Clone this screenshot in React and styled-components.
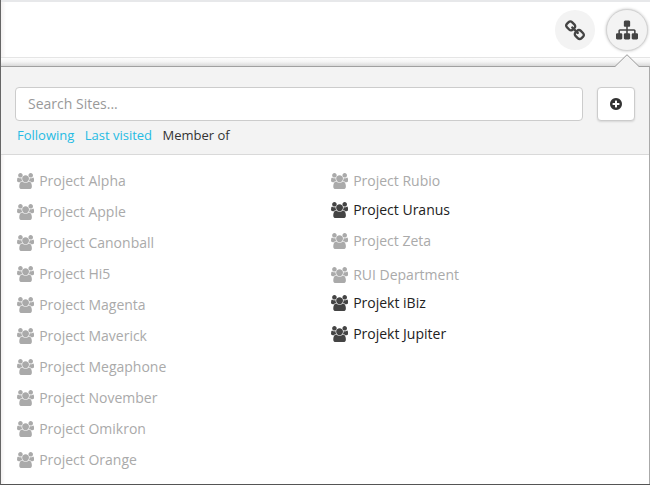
import React from "react";
import styled, { createGlobalStyle } from "styled-components";

const GlobalStyle = createGlobalStyle`
  *, *::before, *::after { box-sizing: border-box; }
  body {
    margin: 0;
    background: #fff;
    font-family: "Open Sans", "Noto Sans", sans-serif;
    font-size: 14px;
    color: #333;
  }
`;

const Frame = styled.div`
  display: flex;
  flex-direction: column;
  width: 650px;
  height: 485px;
  overflow: hidden;
  background: #fff;
  border-left: 1px solid #666;
  border-bottom: 1px solid #555;
`;

const TopBar = styled.header`
  display: flex;
  flex: none;
  align-items: flex-start;
  justify-content: flex-end;
  gap: 11px;
  height: 58px;
  padding: 7px 2px 0 0;
  border-top: 2px solid #e7e8ea;
  border-bottom: 1px solid #e5e5e5;
  background: linear-gradient(90deg, #f3f1f1 0, #fff 5px);
`;

const RoundButton = styled.button`
  display: flex;
  align-items: center;
  justify-content: center;
  width: ${(p) => (p.$active ? 42 : 40)}px;
  height: ${(p) => (p.$active ? 42 : 40)}px;
  margin-top: ${(p) => (p.$active ? 0 : 1)}px;
  padding: ${(p) => (p.$active ? "0 0 1px" : "1px 0 0")};
  border: ${(p) => (p.$active ? "1px solid #d3d3d3" : "0")};
  border-radius: 50%;
  background: #f3f3f3;
  color: #444;
  box-shadow: ${(p) => (p.$active ? "0 0 3px rgba(0, 0, 0, 0.25)" : "none")};
`;

const ShadowStrip = styled.div`
  flex: none;
  height: 8px;
  background: linear-gradient(#fdfdfd 0, #f5f5f5 45%, #d9d9d9 100%);
`;

const Panel = styled.main`
  position: relative;
  flex: 1;
  border-top: 1px solid #a0a0a0;
  border-right: 1px solid #aaa;
`;

const Pointer = styled.svg`
  position: absolute;
  top: -13px;
  left: 613px;
  display: block;
`;

const SearchArea = styled.section`
  height: 88px;
  padding: 20px 14px 0;
  border-bottom: 1px solid #d9d9d9;
  background: #f3f3f3;
`;

const SearchRow = styled.div`
  display: flex;
  gap: 14px;
`;

const SearchInput = styled.input`
  width: 568px;
  height: 34px;
  padding: 0 12px 2px;
  border: 1px solid #ccc;
  border-radius: 4px;
  outline: none;
  background: #fff;
  font: inherit;
  &::placeholder { color: #999; opacity: 1; }
`;

const AddButton = styled.button`
  display: flex;
  align-items: center;
  justify-content: center;
  width: 38px;
  height: 34px;
  padding: 0;
  border: 1px solid #ccc;
  border-radius: 4px;
  background: #fff;
  color: #333;
  box-shadow: 0 1px 2px rgba(0, 0, 0, 0.12);
`;

const Filters = styled.nav`
  display: flex;
  gap: 10.4px;
  padding: 4px 2px 0;
  font-size: 13px;
  line-height: 20px;
`;

const Filter = styled.a`
  color: ${(p) => (p.$current ? "#333" : "#25bbe3")};
`;

const Sites = styled.section`
  display: grid;
  grid-template-columns: 314px 1fr;
  height: 329px;
  padding: 10px 0 0 16px;
  background: linear-gradient(90deg, #f3f1f1 0, #fff 4px);
`;

const SiteList = styled.ul`
  margin: 0;
  padding: 0;
  list-style: none;
`;

const Site = styled.li`
  display: flex;
  align-items: center;
  gap: 5px;
  height: ${(p) => p.$height || 31}px;
  color: ${(p) => (p.$member ? "#222" : "#aaa")};
  line-height: 31px;
  svg {
    margin-top: 1px;
    color: ${(p) => (p.$member ? "#444" : "#aaa")};
  }
`;

const Glyph = styled.svg`
  display: block;
  flex: none;
  fill: currentColor;
`;

function UsersIcon() {
  return (
    <Glyph width="17.15" height="16" viewBox="0 0 1920 1792">
      <path d="M593 896q-162 5-265 128h-134q-82 0-138-40.5t-56-118.5q0-353 124-353 6 0 43.5 21t97.5 42.5 119 21.5q67 0 133-23-5 37-5 66 0 139 81 256zm1071 637q0 120-73 189.5t-194 69.5h-874q-121 0-194-69.5t-73-189.5q0-53 3.5-103.5t14-109 26.5-108.5 43-97.5 62-81 85.5-53.5 111.5-20q10 0 43 21.5t73 48 107 48 135 21.5 135-21.5 107-48 73-48 43-21.5q61 0 111.5 20t85.5 53.5 62 81 43 97.5 26.5 108.5 14 109 3.5 103.5zm-1024-1277q0 106-75 181t-181 75-181-75-75-181 75-181 181-75 181 75 75 181zm704 384q0 159-112.5 271.5t-271.5 112.5-271.5-112.5-112.5-271.5 112.5-271.5 271.5-112.5 271.5 112.5 112.5 271.5zm576 225q0 78-56 118.5t-138 40.5h-134q-103-123-265-128 81-117 81-256 0-29-5-66 66 23 133 23 59 0 119-21.5t97.5-42.5 43.5-21q124 0 124 353zm-128-609q0 106-75 181t-181 75-181-75-75-181 75-181 181-75 181 75 75 181z" />
    </Glyph>
  );
}

function SitemapIcon() {
  return (
    <Glyph width="22" height="22" viewBox="0 0 1792 1792">
      <path d="M1792 1248v320q0 40-28 68t-68 28h-320q-40 0-68-28t-28-68v-320q0-40 28-68t68-28h96v-192h-512v192h96q40 0 68 28t28 68v320q0 40-28 68t-68 28h-320q-40 0-68-28t-28-68v-320q0-40 28-68t68-28h96v-192h-512v192h96q40 0 68 28t28 68v320q0 40-28 68t-68 28h-320q-40 0-68-28t-28-68v-320q0-40 28-68t68-28h96v-192q0-52 38-90t90-38h512v-192h-96q-40 0-68-28t-28-68v-320q0-40 28-68t68-28h320q40 0 68 28t28 68v320q0 40-28 68t-68 28h-96v192h512q52 0 90 38t38 90v192h96q40 0 68 28t28 68z" />
    </Glyph>
  );
}

function LinkIcon() {
  return (
    <Glyph width="22" height="22" viewBox="0 0 1792 1792">
      <path d="M1520 1216q0-40-28-68l-208-208q-28-28-68-28-42 0-72 32 3 3 19 18.5t21.5 21.5 15 19 13 25.5 3.5 27.5q0 40-28 68t-68 28q-15 0-27.5-3.5t-25.5-13-19-15-21.5-21.5-18.5-19q-33 31-33 73 0 40 28 68l206 207q27 27 68 27 40 0 68-26l147-146q28-28 28-67zm-703-705q0-40-28-68l-206-207q-28-28-68-28-39 0-68 27l-147 146q-28 28-28 67 0 40 28 68l208 208q27 27 68 27 42 0 72-31-3-3-19-18.5t-21.5-21.5-15-19-13-25.5-3.5-27.5q0-40 28-68t68-28q15 0 27.5 3.5t25.5 13 19 15 21.5 21.5 18.5 19q33-31 33-73zm895 705q0 120-85 203l-147 146q-83 83-203 83-121 0-204-85l-206-207q-83-83-83-203 0-123 88-209l-88-88q-86 88-208 88-120 0-204-84l-208-208q-84-84-84-204t85-203l147-146q83-83 203-83 121 0 204 85l206 207q83 83 83 203 0 123-88 209l88 88q86-88 208-88 120 0 204 84l208 208q84 84 84 204z" />
    </Glyph>
  );
}

function PlusCircleIcon() {
  return (
    <Glyph width="14" height="14" viewBox="0 0 1792 1792">
      <path d="M1344 960v-128q0-26-19-45t-45-19h-256v-256q0-26-19-45t-45-19h-128q-26 0-45 19t-19 45v256h-256q-26 0-45 19t-19 45v128q0 26 19 45t45 19h256v256q0 26 19 45t45 19h128q26 0 45-19t19-45v-256h256q26 0 45-19t19-45zm320-64q0 209-103 385.5t-279.5 279.5-385.5 103-385.5-103-279.5-279.5-103-385.5 103-385.5 279.5-279.5 385.5-103 385.5 103 279.5 279.5 103 385.5z" />
    </Glyph>
  );
}

const columns = [
  [
    { name: "Project Alpha" },
    { name: "Project Apple" },
    { name: "Project Canonball" },
    { name: "Project Hi5" },
    { name: "Project Magenta" },
    { name: "Project Maverick" },
    { name: "Project Megaphone" },
    { name: "Project November" },
    { name: "Project Omikron" },
    { name: "Project Orange" },
  ],
  [
    { name: "Project Rubio" },
    { name: "Project Uranus", member: true, height: 27 },
    { name: "Project Zeta", height: 35 },
    { name: "RUI Department", height: 33 },
    { name: "Projekt iBiz", member: true, height: 23 },
    { name: "Projekt Jupiter", member: true, height: 39 },
  ],
];

export default function App() {
  return (
    <>
      <GlobalStyle />
      <Frame>
        <TopBar>
          <RoundButton aria-label="Links">
            <LinkIcon />
          </RoundButton>
          <RoundButton $active aria-label="Sites">
            <SitemapIcon />
          </RoundButton>
        </TopBar>
        <ShadowStrip />
        <Panel>
          <Pointer width="26" height="14" viewBox="0 0 26 14">
            <path d="M1 14V12.5L13 .7 25 12.5V14Z" fill="#f3f3f3" />
            <path d="M1 12.5 13 .7 25 12.5" fill="none" stroke="#999" />
          </Pointer>
          <SearchArea>
            <SearchRow>
              <SearchInput placeholder="Search Sites..." />
              <AddButton aria-label="Add site">
                <PlusCircleIcon />
              </AddButton>
            </SearchRow>
            <Filters>
              <Filter>Following</Filter>
              <Filter>Last visited</Filter>
              <Filter $current>Member of</Filter>
            </Filters>
          </SearchArea>
          <Sites>
            {columns.map((sites, i) => (
              <SiteList key={i}>
                {sites.map((site) => (
                  <Site key={site.name} $member={site.member} $height={site.height}>
                    <UsersIcon />
                    {site.name}
                  </Site>
                ))}
              </SiteList>
            ))}
          </Sites>
        </Panel>
      </Frame>
    </>
  );
}
